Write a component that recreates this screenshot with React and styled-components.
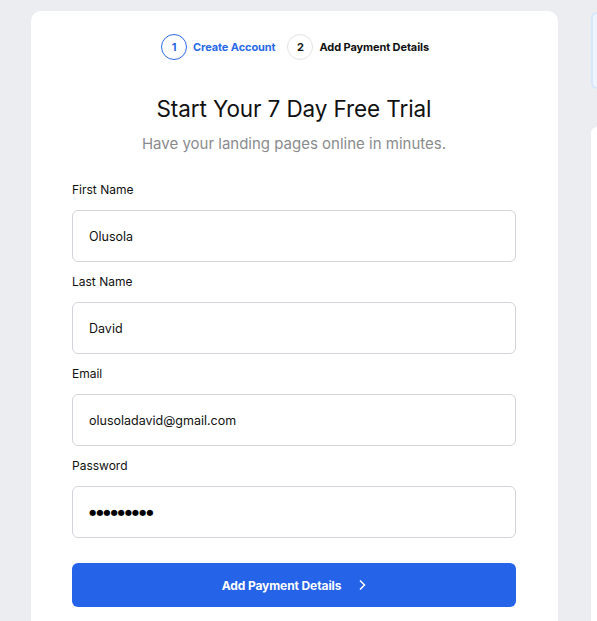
import React from "react";
import styled, { createGlobalStyle } from "styled-components";

const Global = createGlobalStyle`
  html, body { margin: 0; padding: 0; background: #ecedf1; }
  body { font-family: Inter, "Liberation Sans", Arial, sans-serif; overflow: hidden; }
  * { box-sizing: border-box; }
`;

const Page = styled.div`
  display: flex;
  align-items: flex-start;
  gap: 33px;
  padding: 11px 0 0 31px;
  height: 621px;
  overflow: hidden;
`;

const Card = styled.div`
  flex: 0 0 527px;
  background: #ffffff;
  border-radius: 10px;
  padding: 23px 42px 40px 41px;
  min-height: 640px;
`;

const Side = styled.div`
  flex: 1;
  display: flex;
  flex-direction: column;
  gap: 38px;
  padding-top: 1px;
`;

const Notice = styled.div`
  height: 77px;
  background: #eef5ff;
  border: 2px solid #d8e7fc;
  border-radius: 8px 0 0 8px;
  border-right: none;
`;

const SidePanel = styled.div`
  height: 520px;
  background: #ffffff;
  border-radius: 8px 0 0 0;
`;

const Steps = styled.div`
  display: flex;
  justify-content: center;
  align-items: center;
  gap: 12px;
  padding-left: 2px;
`;

const Step = styled.div`
  display: flex;
  align-items: center;
  gap: 6px;
  font-size: 11px;
  font-weight: 700;
  letter-spacing: -0.1px;
  color: ${(p) => (p.$active ? "#2a6ae8" : "#111111")};
`;

const Circle = styled.div`
  width: 26px;
  height: 26px;
  border-radius: 50%;
  border: 1px solid ${(p) => (p.$active ? "#2a6ae8" : "#e2e3e6")};
  display: flex;
  align-items: center;
  justify-content: center;
  font-size: 11px;
  font-weight: 700;
  color: ${(p) => (p.$active ? "#2a6ae8" : "#111111")};
`;

const Title = styled.h1`
  margin: 35px 0 0;
  text-align: center;
  font-size: 22.5px;
  font-weight: 400;
  color: #111111;
  line-height: 28px;
  letter-spacing: -0.1px;
`;

const Subtitle = styled.p`
  margin: 11px 0 0;
  text-align: center;
  font-size: 15px;
  color: #8a8b8e;
  line-height: 20px;
`;

const Form = styled.div`
  margin-top: 27px;
  display: flex;
  flex-direction: column;
  gap: 11px;
`;

const Field = styled.div`
  display: flex;
  flex-direction: column;
  gap: 12px;
`;

const Label = styled.div`
  font-size: 12px;
  line-height: 17px;
  color: #111111;
`;

const Input = styled.div`
  height: 52px;
  border: 1px solid #d3d5dc;
  border-radius: 6px;
  padding: 0 16px;
  display: flex;
  align-items: center;
  font-size: 12.5px;
  color: #111111;
`;

const Dots = styled.span`
  font-family: "DejaVu Sans", sans-serif;
  font-size: 8.2px;
  color: #000;
`;

const Button = styled.button`
  margin-top: 25px;
  width: 100%;
  height: 44px;
  border: none;
  border-radius: 6px;
  background: #2563e8;
  color: #ffffff;
  font-family: inherit;
  font-size: 12px;
  font-weight: 700;
  letter-spacing: -0.1px;
  display: flex;
  align-items: center;
  justify-content: center;
  gap: 17px;
  padding: 0;
`;

export default function App() {
  const fields = [
    { label: "First Name", value: "Olusola" },
    { label: "Last Name", value: "David" },
    { label: "Email", value: "olusoladavid@gmail.com" },
  ];
  return (
    <>
      <Global />
      <Page>
        <Card>
          <Steps>
            <Step $active>
              <Circle $active>1</Circle>
              Create Account
            </Step>
            <Step>
              <Circle>2</Circle>
              Add Payment Details
            </Step>
          </Steps>
          <Title>Start Your 7 Day Free Trial</Title>
          <Subtitle>Have your landing pages online in minutes.</Subtitle>
          <Form>
            {fields.map((f) => (
              <Field key={f.label}>
                <Label>{f.label}</Label>
                <Input>{f.value}</Input>
              </Field>
            ))}
            <Field>
              <Label>Password</Label>
              <Input>
                <Dots>●●●●●●●●●</Dots>
              </Input>
            </Field>
          </Form>
          <Button>
            Add Payment Details
            <svg width="8" height="12" viewBox="0 0 8 12" fill="none">
              <path d="M2 1.5 L6.5 6 L2 10.5" stroke="#fff" strokeWidth="1.5" />
            </svg>
          </Button>
        </Card>
        <Side>
          <Notice />
          <SidePanel />
        </Side>
      </Page>
    </>
  );
}
